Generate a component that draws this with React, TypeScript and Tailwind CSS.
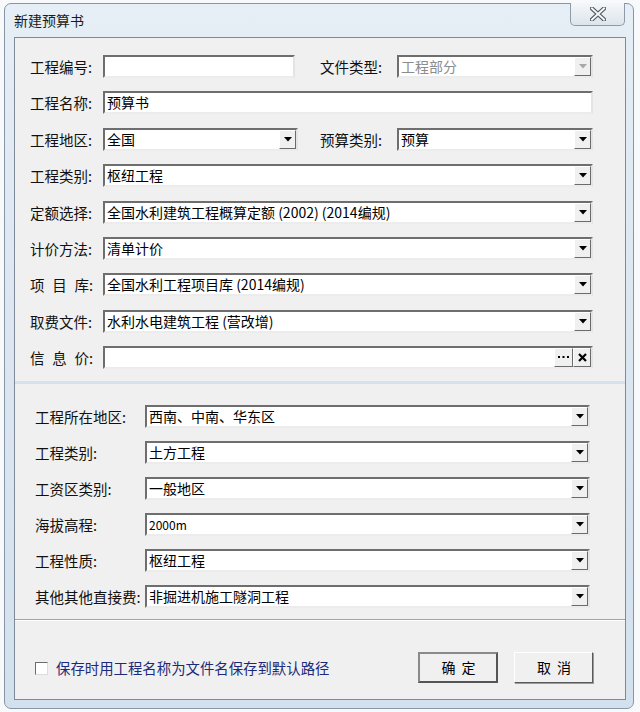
import React from 'react';

const FONT = "font-['Noto_Sans_CJK_SC','Liberation_Sans',sans-serif]";

function DropArrow({ disabled = false }: { disabled?: boolean }) {
  return (
    <div className="w-[17px] flex items-center justify-center bg-[#f0f0f0] border border-t-white border-l-white border-r-[#6b6b6b] border-b-[#6b6b6b]">
      <svg width="8" height="5" viewBox="0 0 8 5">
        <path d="M0 0 H8 L4 4.5 Z" fill={disabled ? '#a8a8a8' : '#000'} />
      </svg>
    </div>
  );
}

function Field({
  value = '',
  combo = false,
  disabled = false,
  width,
  small = false,
  children,
}: {
  value?: string;
  combo?: boolean;
  disabled?: boolean;
  width: string;
  small?: boolean;
  children?: React.ReactNode;
}) {
  return (
    <div
      className={`${width} shrink-0 h-[23px] flex items-stretch bg-white border-2 border-t-[#6e6e6e] border-l-[#6e6e6e] border-r-[#e4e4e4] border-b-[#ececec]`}
    >
      <span
        className={`flex-1 pl-[2px] whitespace-pre overflow-hidden leading-[19px] ${small ? 'text-[12px]' : 'text-[14px]'} ${disabled ? 'text-[#8c8c8c]' : 'text-black'}`}
      >
        {value}
      </span>
      {combo && <DropArrow disabled={disabled} />}
      {children}
    </div>
  );
}

function Label({ text, className = 'w-[73px]' }: { text: string; className?: string }) {
  return <span className={`${className} shrink-0 text-[14.5px] leading-[23px] text-[#111] whitespace-nowrap`}>{text}</span>;
}

// spaced label such as "项 目 库:"
function SpacedLabel({ chars }: { chars: string[] }) {
  return (
    <span className="w-[73px] shrink-0 text-[14.5px] leading-[23px] text-[#111]">
      <span className="w-[63px] flex justify-between">
        {chars.map((c) => (
          <span key={c}>{c}</span>
        ))}
      </span>
    </span>
  );
}

const lowerRows = [
  ['工程所在地区:', '西南、中南、华东区'],
  ['工程类别:', '土方工程'],
  ['工资区类别:', '一般地区'],
  ['海拔高程:', '2000m'],
  ['工程性质:', '枢纽工程'],
  ['其他其他直接费:', '非掘进机施工隧洞工程'],
];

const btnRaised = 'bg-[#f0f0f0] border border-t-white border-l-white border-r-[#6b6b6b] border-b-[#6b6b6b]';

export default function App() {
  return (
    <div className={`w-[640px] h-[712px] bg-[#f7f9fb] pt-[3px] pl-[4px] ${FONT}`}>
      <div className="relative w-[630px] h-[706px] rounded-[7px] border border-[#8796a6] bg-gradient-to-b from-[#e6eef6] via-[#dbe6f1] to-[#d3e1ee] flex flex-col">
        {/* title bar */}
        <div className="h-[33px] flex items-center pl-[9px] text-[14px] text-[#1b1b1b]">新建预算书</div>
        <div className="absolute right-[8px] top-[-1px] w-[55px] h-[23px] rounded-b-[5px] border border-t-0 border-[#8e9aa7] bg-gradient-to-b from-[#f4f7fa] to-[#dde5ec] flex items-center justify-center">
          <svg width="16" height="14" viewBox="0 0 16 14">
            <path d="M2 1.5 L14 12.5 M14 1.5 L2 12.5" stroke="#4b5560" strokeWidth="4.2" strokeLinecap="square" />
            <path d="M2 1.5 L14 12.5 M14 1.5 L2 12.5" stroke="#f4f6f8" strokeWidth="2" strokeLinecap="square" />
          </svg>
        </div>

        {/* client area */}
        <div className="ml-[9px] w-[612px] h-[663px] border border-[#7f8a96] bg-[#f0f0f0] flex flex-col">
          {/* upper section */}
          <div className="pt-[17px] pl-[15px] pb-[12px] flex flex-col gap-[13.4px]">
            <div className="flex items-center">
              <Label text="工程编号:" />
              <Field width="w-[192px]" />
              <Label text="文件类型:" className="ml-[25px] w-[77px]" />
              <Field width="w-[196px]" value="工程部分" combo disabled />
            </div>
            <div className="flex items-center">
              <Label text="工程名称:" />
              <Field width="w-[490px]" value="预算书" />
            </div>
            <div className="flex items-center">
              <Label text="工程地区:" />
              <Field width="w-[195px]" value="全国" combo />
              <Label text="预算类别:" className="ml-[22px] w-[77px]" />
              <Field width="w-[196px]" value="预算" combo />
            </div>
            <div className="flex items-center">
              <Label text="工程类别:" />
              <Field width="w-[490px]" value="枢纽工程" combo />
            </div>
            <div className="flex items-center">
              <Label text="定额选择:" />
              <Field width="w-[490px]" value="全国水利建筑工程概算定额 (2002) (2014编规)" combo />
            </div>
            <div className="flex items-center">
              <Label text="计价方法:" />
              <Field width="w-[490px]" value="清单计价" combo />
            </div>
            <div className="flex items-center">
              <SpacedLabel chars={['项', '目', '库:']} />
              <Field width="w-[490px]" value="全国水利工程项目库 (2014编规)" combo />
            </div>
            <div className="flex items-center">
              <Label text="取费文件:" />
              <Field width="w-[490px]" value="水利水电建筑工程 (营改增)" combo />
            </div>
            <div className="flex items-center">
              <SpacedLabel chars={['信', '息', '价:']} />
              <Field width="w-[490px]">
                <div className={`w-[19px] flex items-center justify-center ${btnRaised}`}>
                  <svg width="11" height="3" viewBox="0 0 11 3">
                    <rect x="0" y="0" width="2" height="2" fill="#000" />
                    <rect x="4.5" y="0" width="2" height="2" fill="#000" />
                    <rect x="9" y="0" width="2" height="2" fill="#000" />
                  </svg>
                </div>
                <div className={`w-[18px] flex items-center justify-center ${btnRaised}`}>
                  <svg width="9" height="9" viewBox="0 0 9 9">
                    <path d="M1 1 L8 8 M8 1 L1 8" stroke="#000" strokeWidth="2.2" />
                  </svg>
                </div>
              </Field>
            </div>
          </div>

          {/* divider */}
          <div className="h-[3px] bg-[#d5e1ec]" />

          {/* lower section */}
          <div className="pt-[21px] pl-[20px] pb-[11px] flex flex-col gap-[13px]">
            {lowerRows.map(([label, value]) => (
              <div key={label} className="flex items-center">
                <Label text={label} className="w-[110px]" />
                <Field width="w-[445px]" value={value} combo small={value === '2000m'} />
              </div>
            ))}
          </div>

          {/* bottom area */}
          <div className="flex-1 border-t border-[#a3a3a3] shadow-[inset_0_1px_0_#ffffff] flex items-start pt-[32px] pl-[20px]">
            <label className="flex items-center mt-[9px]">
              <span className="w-[13px] h-[13px] bg-white border border-[#6c6c6c] border-r-[#dcdcdc] border-b-[#dcdcdc]" />
              <span className="ml-[8px] text-[14.4px] leading-none text-[#1c2a7a]">保存时用工程名称为文件名保存到默认路径</span>
            </label>
            <button className="ml-[89px] w-[80px] h-[31px] bg-[#f0f0f0] border-2 border-t-[#8a8a8a] border-l-[#8a8a8a] border-r-[#555555] border-b-[#555555] text-[14px] text-black tracking-[6px] pl-[6px]">
              确定
            </button>
            <button className="ml-[16px] w-[79px] h-[31px] bg-[#f0f0f0] border border-t-white border-l-white border-r-[#5a5a5a] border-b-[#5a5a5a] shadow-[1px_1px_0_#9a9a9a] text-[14px] text-black tracking-[6px] pl-[6px]">
              取消
            </button>
          </div>
        </div>
      </div>
    </div>
  );
}
